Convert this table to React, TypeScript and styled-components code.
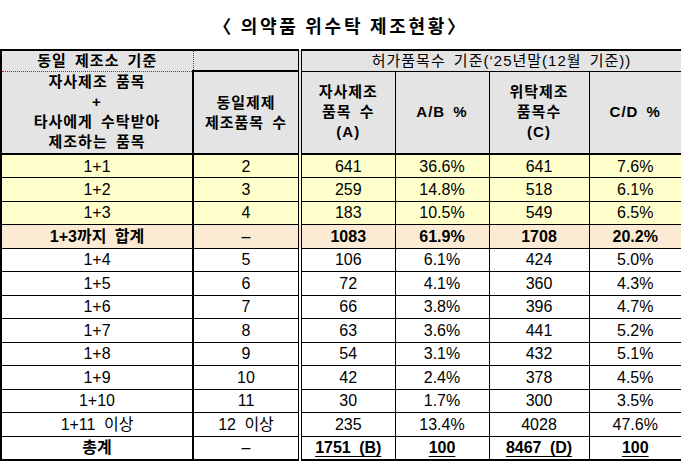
import React from "react";
import styled, { createGlobalStyle } from "styled-components";

const GlobalStyle = createGlobalStyle`
  html, body {
    margin: 0;
    padding: 0;
    background: #fff;
  }
  body {
    font-family: "Liberation Sans", "Noto Sans CJK KR", sans-serif;
    color: #000;
  }
`;

type Tone = "plain" | "yellow" | "peach";

const toneColor: Record<Tone, string> = {
  plain: "#ffffff",
  yellow: "#ffffcc",
  peach: "#fcebd4",
};

const rows: { label: string; same: string; a: string; ab: string; c: string; cd: string; tone: Tone }[] = [
  { label: "1+1", same: "2", a: "641", ab: "36.6%", c: "641", cd: "7.6%", tone: "yellow" },
  { label: "1+2", same: "3", a: "259", ab: "14.8%", c: "518", cd: "6.1%", tone: "yellow" },
  { label: "1+3", same: "4", a: "183", ab: "10.5%", c: "549", cd: "6.5%", tone: "yellow" },
  { label: "1+3까지 합계", same: "–", a: "1083", ab: "61.9%", c: "1708", cd: "20.2%", tone: "peach" },
  { label: "1+4", same: "5", a: "106", ab: "6.1%", c: "424", cd: "5.0%", tone: "plain" },
  { label: "1+5", same: "6", a: "72", ab: "4.1%", c: "360", cd: "4.3%", tone: "plain" },
  { label: "1+6", same: "7", a: "66", ab: "3.8%", c: "396", cd: "4.7%", tone: "plain" },
  { label: "1+7", same: "8", a: "63", ab: "3.6%", c: "441", cd: "5.2%", tone: "plain" },
  { label: "1+8", same: "9", a: "54", ab: "3.1%", c: "432", cd: "5.1%", tone: "plain" },
  { label: "1+9", same: "10", a: "42", ab: "2.4%", c: "378", cd: "4.5%", tone: "plain" },
  { label: "1+10", same: "11", a: "30", ab: "1.7%", c: "300", cd: "3.5%", tone: "plain" },
  { label: "1+11 이상", same: "12 이상", a: "235", ab: "13.4%", c: "4028", cd: "47.6%", tone: "plain" },
];

export default function App() {
  return (
    <>
      <GlobalStyle />
      <Page>
        <Title>〈 의약품 위수탁 제조현황〉</Title>
        <Table>
          <colgroup>
            <col style={{ width: 192 }} />
            <col style={{ width: 107 }} />
            <col style={{ width: 95 }} />
            <col style={{ width: 94 }} />
            <col style={{ width: 100 }} />
            <col style={{ width: 93 }} />
          </colgroup>
          <thead>
            <TopRow>
              <BasisCell>동일 제조소 기준</BasisCell>
              <BlankCell />
              <PermitCell colSpan={4}>허가품목수 기준(‘25년말(12월 기준))</PermitCell>
            </TopRow>
            <LabelRow>
              <LabelCell>
                자사제조 품목
                <br />+<br />
                타사에게 수탁받아
                <br />
                제조하는 품목
              </LabelCell>
              <LabelCell $boxed>
                동일제제
                <br />
                제조품목 수
              </LabelCell>
              <LabelCell $split>
                자사제조
                <br />
                품목 수
                <br />
                (A)
              </LabelCell>
              <LabelCell>A/B %</LabelCell>
              <LabelCell>
                위탁제조
                <br />
                품목수
                <br />
                (C)
              </LabelCell>
              <LabelCell>C/D %</LabelCell>
            </LabelRow>
          </thead>
          <tbody>
            {rows.map((r) => {
              const sum = r.tone === "peach";
              return (
                <BodyRow key={r.label} $tone={r.tone}>
                  <Cell $bold={sum}>{r.label}</Cell>
                  <Cell $thickLeft>{r.same}</Cell>
                  <Cell $split $bold={sum}>{r.a}</Cell>
                  <Cell $bold={sum}>{r.ab}</Cell>
                  <Cell $bold={sum}>{r.c}</Cell>
                  <Cell $bold={sum}>{r.cd}</Cell>
                </BodyRow>
              );
            })}
            <BodyRow $tone="plain">
              <Cell $bold>총계</Cell>
              <Cell $thickLeft>–</Cell>
              <Cell $split>
                <Total>1751 (B)</Total>
              </Cell>
              <Cell>
                <Total>100</Total>
              </Cell>
              <Cell>
                <Total>8467 (D)</Total>
              </Cell>
              <Cell>
                <Total>100</Total>
              </Cell>
            </BodyRow>
          </tbody>
        </Table>
      </Page>
    </>
  );
}

const Page = styled.div`
  width: 681px;
  display: flex;
  flex-direction: column;
`;

const Title = styled.div`
  height: 49px;
  display: flex;
  align-items: center;
  justify-content: center;
  padding-top: 1px;
  box-sizing: border-box;
  font-family: "Noto Sans CJK KR", sans-serif;
  font-size: 18px;
  font-weight: 700;
  letter-spacing: 2.7px;
`;

const Table = styled.table`
  width: 681px;
  table-layout: fixed;
  border-collapse: collapse;
  border: 2px solid #000;
  font-size: 15px;
  text-align: center;
`;

const TopRow = styled.tr`
  height: 21px;
  background: #e4e4e4;
`;

const BasisCell = styled.th`
  padding: 0;
  font-weight: 700;
  line-height: 18px;
  letter-spacing: 1px;
  word-spacing: 3px;
  border-right: 1px dotted #ff0000;
  border-bottom: 1px dotted #ff0000;
`;

const BlankCell = styled.th`
  padding: 0;
`;

const PermitCell = styled.th`
  padding: 0 0 0 20px;
  font-weight: 400;
  line-height: 18px;
  letter-spacing: 1px;
  word-spacing: 3px;
  border-left: 4px double #000;
  border-bottom: 1px solid #000;
`;

const LabelRow = styled.tr`
  height: 83px;
  background: #e4e4e4;
`;

const LabelCell = styled.th<{ $boxed?: boolean; $split?: boolean }>`
  padding: 0;
  font-weight: 700;
  line-height: 20px;
  letter-spacing: 1px;
  word-spacing: 3px;
  border-bottom: 2px solid #000;
  border-left: ${(p) => (p.$split ? "4px double #000" : p.$boxed ? "2px solid #000" : "1px solid #000")};
  border-top: ${(p) => (p.$boxed ? "2px solid #000" : "1px solid #000")};
  border-right: ${(p) => (p.$boxed ? "2px solid #000" : "1px solid #000")};

  &:first-child {
    border-top: none;
    border-left: 2px solid #000;
  }
`;

const BodyRow = styled.tr<{ $tone: Tone }>`
  height: 23.5px;
  background: ${(p) => toneColor[p.$tone]};
`;

const Cell = styled.td<{ $thickLeft?: boolean; $split?: boolean; $bold?: boolean }>`
  padding: 0;
  white-space: nowrap;
  font-size: 16px;
  line-height: 19px;
  word-spacing: 4px;
  border: 1px solid #000;
  font-weight: ${(p) => (p.$bold ? 700 : 400)};
  ${(p) => p.$thickLeft && "border-left: 2px solid #000;"}
  ${(p) => p.$split && "border-left: 4px double #000;"}
`;

const Total = styled.span`
  font-weight: 700;
  text-decoration: underline;
  text-underline-offset: 3px;
`;
